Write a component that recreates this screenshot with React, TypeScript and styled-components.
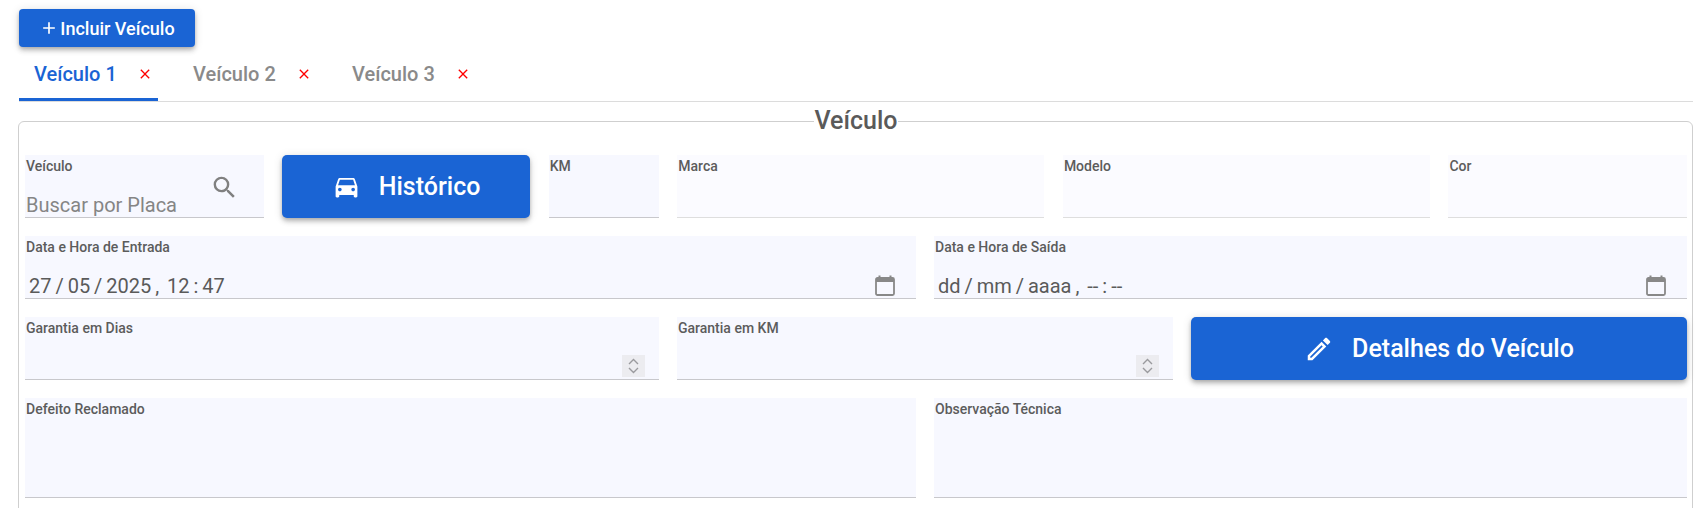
import React from "react";
import styled, { createGlobalStyle } from "styled-components";
import { MdAdd, MdClose, MdDirectionsCar, MdOutlineEdit, MdSearch } from "react-icons/md";

const GlobalStyle = createGlobalStyle`
  html, body {
    margin: 0;
    height: 508px;
    overflow: hidden;
    background: #fff;
    font-family: Roboto, "Liberation Sans", sans-serif;
  }
`;

const Page = styled.div`
  padding: 9px 11px 0 19px;
`;

const PrimaryButton = styled.button<{ $size: "small" | "large" }>`
  display: flex;
  align-items: center;
  justify-content: center;
  gap: ${(p) => (p.$size === "small" ? "1px" : "18px")};
  width: ${(p) => (p.$size === "small" ? "176px" : "100%")};
  height: ${(p) => (p.$size === "small" ? "38px" : "100%")};
  padding: 0;
  border: none;
  border-radius: ${(p) => (p.$size === "small" ? "4px" : "5px")};
  background: #1a64d4;
  color: #fff;
  font-family: inherit;
  font-size: ${(p) => (p.$size === "small" ? "18px" : "25px")};
  font-weight: 500;
  box-shadow: 0 2px 4px -1px rgba(0, 0, 0, 0.2), 0 4px 5px 0 rgba(0, 0, 0, 0.14),
    0 1px 10px 0 rgba(0, 0, 0, 0.12);
`;

const TabBar = styled.div`
  display: flex;
  height: 54px;
  border-bottom: 1px solid #dcdcdc;
`;

const Tab = styled.div<{ $active?: boolean }>`
  display: flex;
  align-items: center;
  width: 139px;
  height: 54px;
  box-sizing: border-box;
  margin-right: 20px;
  padding: 2px 0 0 15px;
  border-bottom: 3px solid ${(p) => (p.$active ? "#1a64d4" : "transparent")};
  color: ${(p) => (p.$active ? "#1a64d4" : "#8a8a8a")};
  font-size: 20px;
  font-weight: 500;
`;

const TabClose = styled(MdClose)`
  margin-left: 20px;
  color: #f00;
`;

const Panel = styled.fieldset`
  margin: 5px 0 0 -1px;
  padding: 20px 5px 20px 6px;
  border: 1px solid #cfcfcf;
  border-radius: 6px;
`;

const PanelTitle = styled.legend`
  margin: 0 auto;
  padding: 0;
  color: #5a5a5a;
  font-size: 25px;
  font-weight: 500;
  line-height: 28px;
`;

const Rows = styled.div`
  display: flex;
  flex-direction: column;
  gap: 18px;
`;

const Row = styled.div<{ $columns: string; $height?: number; $gap?: number }>`
  display: grid;
  grid-template-columns: ${(p) => p.$columns};
  gap: ${(p) => p.$gap ?? 18}px;
  height: ${(p) => p.$height ?? 63}px;
`;

const Field = styled.div<{ $disabled?: boolean }>`
  position: relative;
  display: flex;
  flex-direction: column;
  justify-content: space-between;
  box-sizing: border-box;
  height: 100%;
  padding: 3px 0 0 1px;
  background: ${(p) => (p.$disabled ? "#fbfbff" : "#f7f8ff")};
  border-bottom: 1px solid ${(p) => (p.$disabled ? "#dedede" : "#c8c8cc")};
`;

const FieldLabel = styled.span`
  color: #5c5c5c;
  font-size: 14px;
  font-weight: 500;
  line-height: 16px;
`;

const ValueRow = styled.div`
  display: flex;
  align-items: flex-end;
  justify-content: space-between;
`;

const Placeholder = styled.span`
  color: #858585;
  font-size: 20px;
  line-height: 24px;
`;

const DateText = styled.span`
  padding: 0 0 0 3px;
  color: #5a5a5a;
  font-size: 20px;
  line-height: 24px;
  word-spacing: -1px;
`;

const SearchAdornment = styled(MdSearch)`
  position: absolute;
  top: 18px;
  right: 25px;
  color: #808080;
`;

const CalendarIcon = styled.svg`
  margin: 0 21px 2px 0;
  color: #888;
`;

const Spinner = styled.div`
  display: flex;
  flex-direction: column;
  align-items: center;
  justify-content: center;
  width: 23px;
  height: 22px;
  margin: 0 14px 2px 0;
  background: #ececf0;
  color: #9a9a9e;
`;

const ChevronRow = styled.svg`
  display: block;
`;

const Calendar = () => (
  <CalendarIcon width="20" height="21" viewBox="0 0 20 21" fill="none">
    <path d="M1 3h18v4H1z" fill="currentColor" />
    <path d="M4.5 0.5v3M15.5 0.5v3" stroke="currentColor" strokeWidth="2" />
    <rect x="1" y="3" width="18" height="17" rx="1.5" stroke="currentColor" strokeWidth="1.8" />
  </CalendarIcon>
);

const NumberSpinner = () => (
  <Spinner>
    <ChevronRow width="11" height="8" viewBox="0 0 11 8" fill="none">
      <path d="M1 6l4.5-4.5L10 6" stroke="currentColor" strokeWidth="1.4" />
    </ChevronRow>
    <ChevronRow width="11" height="8" viewBox="0 0 11 8" fill="none">
      <path d="M1 2l4.5 4.5L10 2" stroke="currentColor" strokeWidth="1.4" />
    </ChevronRow>
  </Spinner>
);

const tabs = ["Veículo 1", "Veículo 2", "Veículo 3"];

export default function App() {
  return (
    <Page>
      <GlobalStyle />
      <PrimaryButton $size="small">
        <MdAdd size={20} />
        Incluir Veículo
      </PrimaryButton>
      <TabBar>
        {tabs.map((tab, i) => (
          <Tab key={tab} $active={i === 0}>
            {tab}
            <TabClose size={16} />
          </Tab>
        ))}
      </TabBar>
      <Panel>
        <PanelTitle>Veículo</PanelTitle>
        <Rows>
          <Row $columns="238.5px 248px 110px 367px 367px 1fr" $gap={18.6}>
            <Field>
              <FieldLabel>Veículo</FieldLabel>
              <ValueRow>
                <Placeholder>Buscar por Placa</Placeholder>
              </ValueRow>
              <SearchAdornment size={29} />
            </Field>
            <PrimaryButton $size="large">
              <MdDirectionsCar size={29} />
              Histórico
            </PrimaryButton>
            <Field>
              <FieldLabel>KM</FieldLabel>
            </Field>
            <Field $disabled>
              <FieldLabel>Marca</FieldLabel>
            </Field>
            <Field $disabled>
              <FieldLabel>Modelo</FieldLabel>
            </Field>
            <Field $disabled>
              <FieldLabel>Cor</FieldLabel>
            </Field>
          </Row>
          <Row $columns="891fr 753fr">
            <Field>
              <FieldLabel>Data e Hora de Entrada</FieldLabel>
              <ValueRow>
                <DateText>27 / 05 / 2025 ,&nbsp; 12 : 47</DateText>
                <Calendar />
              </ValueRow>
            </Field>
            <Field>
              <FieldLabel>Data e Hora de Saída</FieldLabel>
              <ValueRow>
                <DateText>dd / mm / aaaa ,&nbsp; -- : --</DateText>
                <Calendar />
              </ValueRow>
            </Field>
          </Row>
          <Row $columns="634fr 496fr 496fr">
            <Field>
              <FieldLabel>Garantia em Dias</FieldLabel>
              <ValueRow>
                <span />
                <NumberSpinner />
              </ValueRow>
            </Field>
            <Field>
              <FieldLabel>Garantia em KM</FieldLabel>
              <ValueRow>
                <span />
                <NumberSpinner />
              </ValueRow>
            </Field>
            <PrimaryButton $size="large">
              <MdOutlineEdit size={30} />
              Detalhes do Veículo
            </PrimaryButton>
          </Row>
          <Row $columns="891fr 753fr" $height={100}>
            <Field>
              <FieldLabel>Defeito Reclamado</FieldLabel>
            </Field>
            <Field>
              <FieldLabel>Observação Técnica</FieldLabel>
            </Field>
          </Row>
        </Rows>
      </Panel>
    </Page>
  );
}
